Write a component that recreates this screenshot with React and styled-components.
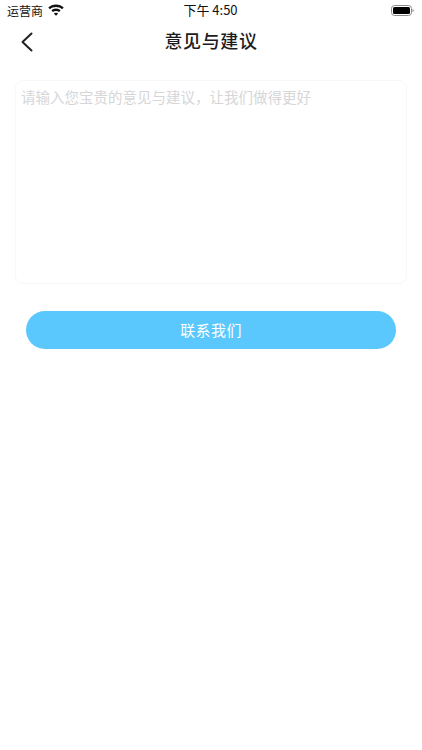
import styled, { createGlobalStyle } from "styled-components";

const GlobalStyle = createGlobalStyle`
  html, body {
    margin: 0;
    padding: 0;
    background: #fff;
  }
  body {
    font-family: "Noto Sans CJK SC", "Liberation Sans", sans-serif;
  }
`;

const Page = styled.div`
  width: 422px;
  height: 750px;
  background: #fff;
  overflow: hidden;
`;

const StatusBar = styled.div`
  height: 20px;
  display: grid;
  grid-template-columns: 1fr auto 1fr;
  align-items: center;
  padding: 0 8px 0 7px;
  color: #111;
  font-size: 12px;
`;

const Carrier = styled.div`
  display: flex;
  align-items: center;
  gap: 5px;
`;

const Clock = styled.div`
  font-size: 13px;
  line-height: 20px;
`;

const BatteryWrap = styled.div`
  justify-self: end;
  display: flex;
`;

const NavBar = styled.div`
  height: 40px;
  position: relative;
  display: flex;
  align-items: center;
  justify-content: center;
`;

const BackButton = styled.button`
  position: absolute;
  left: 19px;
  top: 11px;
  width: 16px;
  height: 22px;
  padding: 0;
  border: 0;
  background: none;
  display: flex;
`;

const Title = styled.h1`
  margin: 0;
  font-size: 18px;
  font-weight: 500;
  letter-spacing: 0.6px;
  color: #1c1c1e;
`;

const Body = styled.div`
  padding: 20px 15px 0;
  display: flex;
  flex-direction: column;
`;

const FeedbackBox = styled.textarea`
  box-sizing: border-box;
  width: 392px;
  height: 204px;
  padding: 5px 5px;
  border: 1px solid #f8f8f8;
  border-radius: 8px;
  resize: none;
  outline: none;
  font-family: inherit;
  font-size: 14.5px;
  line-height: 22px;
  background: #fff;

  &::placeholder {
    color: #d6d6d8;
    opacity: 1;
  }
`;

const ContactButton = styled.button`
  margin: 27px 0 0 11px;
  width: 370px;
  height: 38px;
  padding: 0 0 2px;
  border: 0;
  border-radius: 19px;
  background: #5ac8fd;
  color: #fff;
  font-family: inherit;
  font-size: 15px;
  letter-spacing: 0.4px;
`;

const WifiIcon = () => (
  <svg width="16" height="12" viewBox="0 0 16 12">
    <path d="M8 .5C5.100.5 2.400 1.600.3 3.500l1.600 1.700C3.500 3.700 5.600 2.900 8 2.900s4.500.8 6.100 2.300l1.600-1.700C13.600 1.600 10.900.5 8 .5z" fill="#111" />
    <path d="M8 4.600c-1.800 0-3.400.7-4.600 1.800l1.600 1.700C5.800 7.400 6.800 7 8 7s2.200.4 3 1.100l1.600-1.700C11.400 5.300 9.800 4.600 8 4.600z" fill="#111" />
    <path d="M8 8.700c-.9 0-1.600.3-2.200.8L8 11.800l2.200-2.300c-.6-.5-1.300-.8-2.200-.8z" fill="#111" />
  </svg>
);

const BatteryIcon = () => (
  <svg width="23" height="11" viewBox="0 0 23 11">
    <rect x="0.5" y="0.5" width="20" height="10" rx="3" fill="none" stroke="#8a8a8a" />
    <rect x="2" y="2" width="17" height="7" rx="1.500" fill="#000" />
    <path d="M21.500 3.800c.8.3 1.200.9 1.200 1.700s-.4 1.400-1.200 1.700z" fill="#8a8a8a" />
  </svg>
);

const BackIcon = () => (
  <svg width="16" height="22" viewBox="0 0 16 22">
    <path d="M12.500 2.500L3.500 11l9 8.500" fill="none" stroke="#222" strokeWidth="2" strokeLinecap="round" strokeLinejoin="round" />
  </svg>
);

export default function App() {
  return (
    <Page>
      <GlobalStyle />
      <StatusBar>
        <Carrier>
          运营商
          <WifiIcon />
        </Carrier>
        <Clock>下午 4:50</Clock>
        <BatteryWrap>
          <BatteryIcon />
        </BatteryWrap>
      </StatusBar>
      <NavBar>
        <BackButton aria-label="返回">
          <BackIcon />
        </BackButton>
        <Title>意见与建议</Title>
      </NavBar>
      <Body>
        <FeedbackBox placeholder="请输入您宝贵的意见与建议，让我们做得更好" />
        <ContactButton>联系我们</ContactButton>
      </Body>
    </Page>
  );
}
